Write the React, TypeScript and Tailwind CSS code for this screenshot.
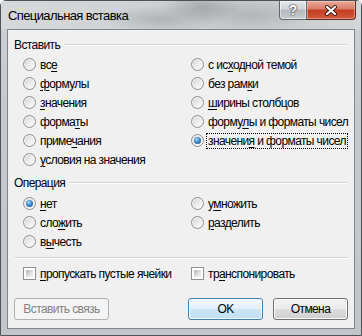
import React from "react";

type Parts = [string, string, string];

function Radio({ checked }: { checked?: boolean }) {
  return (
    <span className="flex h-[13px] w-[13px] shrink-0 items-center justify-center rounded-full border border-[#8e8f8f] bg-[linear-gradient(135deg,#cfcfcf_0%,#ececec_50%,#ffffff_100%)] shadow-[inset_0_0_0_1px_#f4f4f4]">
      {checked && (
        <span className="h-[7px] w-[7px] rounded-full bg-[radial-gradient(circle_at_40%_35%,#a6dcfb_0%,#3a8bd0_45%,#15407a_100%)]" />
      )}
    </span>
  );
}

function Check() {
  return (
    <span className="flex h-[13px] w-[13px] shrink-0 border border-[#8e8f8f] bg-white p-[2px]">
      <span className="h-full w-full bg-[linear-gradient(135deg,#aeb3b9_0%,#e0e2e4_60%,#f4f4f4_100%)]" />
    </span>
  );
}

function Label({ p, focus }: { p: Parts; focus?: boolean }) {
  return (
    <span
      className={
        "block h-[16px] whitespace-pre px-[1px] leading-[14px] border " +
        (focus ? "border-dotted border-black" : "border-transparent")
      }
    >
      {p[0]}
      <span className="underline underline-offset-[2px] decoration-1">{p[1]}</span>
      {p[2]}
    </span>
  );
}

function Opt({ p, checked, focus }: { p: Parts; checked?: boolean; focus?: boolean }) {
  return (
    <div className="flex h-[19px] items-center">
      <Radio checked={checked} />
      <span className="ml-[2px]">
        <Label p={p} focus={focus} />
      </span>
    </div>
  );
}

function GroupHead({ text }: { text: string }) {
  return (
    <div className="flex h-[16px] items-center pl-[6px] pr-[6px]">
      <span className="whitespace-nowrap leading-[16px]">{text}</span>
      <div className="ml-[4px] flex-1 border-t border-b border-t-[#d5d5d5] border-b-white" />
    </div>
  );
}

const left1: Parts[] = [
  ["вс", "е", ""],
  ["", "ф", "ормулы"],
  ["", "з", "начения"],
  ["форма", "т", "ы"],
  ["приме", "ч", "ания"],
  ["", "у", "словия на значения"],
];
const right1: Parts[] = [
  ["с ис", "х", "одной темой"],
  ["без рам", "к", "и"],
  ["", "ш", "ирины столбцов"],
  ["форму", "л", "ы и форматы чисел"],
  ["значени", "я", " и форматы чисел"],
];

export default function App() {
  return (
    <div className="h-[336px] w-[362px] overflow-hidden bg-white font-['Liberation_Sans',Arial,sans-serif] text-[12px] tracking-[-0.6px] text-black">
      <div className="flex h-[336px] w-[362px] flex-col rounded-t-[6px] border border-[#4a525a] bg-[linear-gradient(180deg,#cfd2d4_0%,#c6cacd_30%,#c2c6c9_100%)]">
        {/* title bar */}
        <div className="flex h-[28px] shrink-0 items-start bg-[radial-gradient(ellipse_60px_14px_at_160px_18px,rgba(120,125,130,0.35),transparent),radial-gradient(ellipse_40px_14px_at_200px_6px,rgba(100,105,110,0.35),transparent),radial-gradient(ellipse_70px_16px_at_250px_14px,rgba(130,130,130,0.3),transparent),linear-gradient(90deg,#d6d8d9_0%,#cfd2d4_40%,#c8cbce_70%,#d3d5d6_100%)]">
          <span className="ml-[7px] mt-[7px] whitespace-nowrap text-[13px] leading-[16px] tracking-[-0.6px] text-black">Специальная вставка</span>
          <div className="ml-auto mr-[5px] flex">
            <div className="flex h-[19px] w-[28px] items-center justify-center rounded-bl-[4px] border border-t-0 border-[#5f666d] bg-[linear-gradient(180deg,#e4e7ea_0%,#d2d6da_45%,#b4b9be_50%,#c6cbd0_100%)] shadow-[inset_0_0_0_1px_rgba(255,255,255,0.5)]">
              <span className="text-[14px] font-bold leading-none tracking-normal text-white [text-shadow:0_0_2px_#202020,0_0_1px_#000]">?</span>
            </div>
            <div className="flex h-[19px] w-[49px] items-center justify-center rounded-br-[4px] border border-l-0 border-t-0 border-[#5a2a22] bg-[linear-gradient(180deg,#eaa99a_0%,#d77b66_45%,#c43d22_50%,#d2593a_100%)] shadow-[inset_0_0_0_1px_rgba(255,220,210,0.45)]">
              <svg width="14" height="11" viewBox="0 0 14 11">
                <path d="M3 2 L11 9 M11 2 L3 9" stroke="#3a1a14" strokeWidth="4" strokeLinecap="round" />
                <path d="M3 2 L11 9 M11 2 L3 9" stroke="#ffffff" strokeWidth="2.2" strokeLinecap="round" />
              </svg>
            </div>
          </div>
        </div>

        {/* client area */}
        <div className="mx-[6px] flex h-[300px] shrink-0 flex-col border border-[#7d8690] bg-[#f0f0f0] pt-[7px]">
          <GroupHead text="Вставить" />
          <div className="mt-[2px] grid grid-cols-[168px_1fr] pl-[15px]">
            <div className="flex flex-col">
              {left1.map((p, i) => (
                <Opt key={i} p={p} />
              ))}
            </div>
            <div className="flex flex-col">
              {right1.map((p, i) => (
                <Opt key={i} p={p} checked={i === 4} focus={i === 4} />
              ))}
            </div>
          </div>

          <div className="mt-[6px]">
            <GroupHead text="Операция" />
          </div>
          <div className="mt-[3px] grid grid-cols-[168px_1fr] pl-[15px]">
            <div className="flex flex-col">
              <Opt p={["", "н", "ет"]} checked />
              <Opt p={["сло", "ж", "ить"]} />
              <Opt p={["в", "ы", "честь"]} />
            </div>
            <div className="flex flex-col">
              <Opt p={["у", "м", "ножить"]} />
              <Opt p={["", "р", "азделить"]} />
            </div>
          </div>

          <div className="mx-[6px] mt-[6px] border-t border-b border-t-[#d5d5d5] border-b-white" />

          <div className="mt-[5px] grid grid-cols-[168px_1fr] pl-[15px]">
            <div className="flex h-[19px] items-center">
              <Check />
              <span className="ml-[2px]">
                <Label p={["", "п", "ропускать пустые ячейки"]} />
              </span>
            </div>
            <div className="flex h-[19px] items-center">
              <Check />
              <span className="ml-[2px]">
                <Label p={["тр", "а", "нспонировать"]} />
              </span>
            </div>
          </div>

          <div className="mt-[15px] flex pl-[6px]">
            <div className="flex h-[22px] w-[95px] items-center justify-center whitespace-nowrap rounded-[3px] border border-[#adb2b5] bg-[#f4f4f4] text-[#838383]">
              Вставить связь
            </div>
            <div className="ml-[79px] flex h-[22px] w-[75px] items-center justify-center rounded-[3px] border border-[#3c7fb1] bg-[linear-gradient(180deg,#f0f8fd_0%,#e2f1fa_50%,#cbe6f6_50%,#bfe0f4_100%)] shadow-[inset_0_0_0_1px_#f8fcff]">
              OK
            </div>
            <div className="ml-[10px] flex h-[22px] w-[75px] items-center justify-center rounded-[3px] border border-[#707070] bg-[linear-gradient(180deg,#f2f2f2_0%,#ebebeb_50%,#dddddd_50%,#cfcfcf_100%)] shadow-[inset_0_0_0_1px_#fcfcfc]">
              Отмена
            </div>
          </div>
        </div>
      </div>
    </div>
  );
}
